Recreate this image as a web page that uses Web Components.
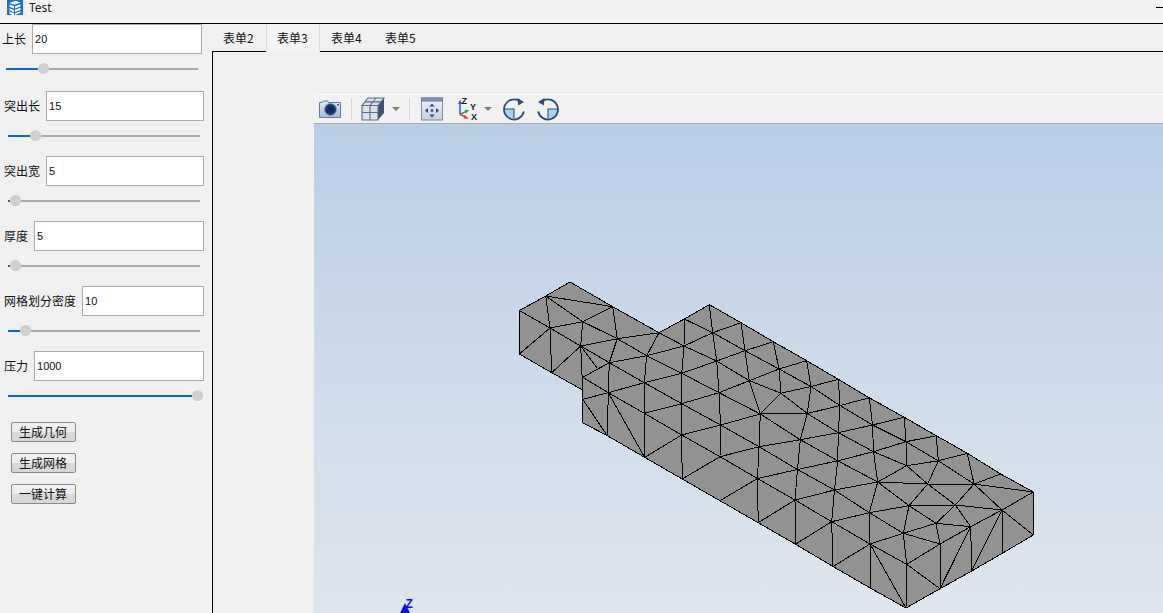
<!DOCTYPE html>
<html>
<head>
<meta charset="utf-8">
<title>Test</title>
<style>
  html, body { margin: 0; height: 100%; overflow: hidden; background: #f0f0f0; }
  body { font: 12px "Noto Sans CJK SC", "Noto Sans", sans-serif; color: #111; }
  #app { display: flex; flex-direction: column; height: 613px; }
  #body { display: flex; flex: 1; min-height: 0; }
  #side { width: 212px; flex: none; padding-left: 4px; box-sizing: border-box; }
  #main { flex: 1; display: flex; flex-direction: column; min-width: 0; }
  #actions { display: flex; flex-direction: column; gap: 11px; margin: 6px 0 0 7px; align-items: flex-start; }
</style>
</head>
<body>
<div id="app">
  <win-title>Test</win-title>
  <div id="body">
    <div id="side">
      <param-row label="上长" value="20" fill="32" first></param-row>
      <param-row label="突出长" value="15" fill="22"></param-row>
      <param-row label="突出宽" value="5" fill="2"></param-row>
      <param-row label="厚度" value="5" fill="2"></param-row>
      <param-row label="网格划分密度" value="10" fill="12"></param-row>
      <param-row label="压力" value="1000" fill="184"></param-row>
      <div id="actions">
        <action-button>生成几何</action-button>
        <action-button>生成网格</action-button>
        <action-button>一键计算</action-button>
      </div>
    </div>
    <div id="main">
      <tab-bar>
        <tab-item>表单2</tab-item>
        <tab-item selected>表单3</tab-item>
        <tab-item>表单4</tab-item>
        <tab-item>表单5</tab-item>
      </tab-bar>
      <tab-pane>
        <view-toolbar></view-toolbar>
        <mesh-view></mesh-view>
      </tab-pane>
    </div>
  </div>
</div>

<script>
class WinTitle extends HTMLElement {
  constructor(){
    super();
    const shadowRoot = this.attachShadow({mode: 'open'});
    shadowRoot.innerHTML = `
    <style>
      :host { display: flex; align-items: flex-start; height: 23px; border-bottom: 1px solid #000; background: #f3f2f2; flex: none; font: 12px "Noto Sans", "Liberation Sans", sans-serif; color: #222; }
      svg { margin-left: 7px; flex: none; }
      span { margin-left: 6px; line-height: 15px; }
      i { margin-left: auto; width: 7px; height: 1px; background: #000; margin-top: 7px; }
    </style>
    <svg width="16" height="15" viewBox="0 0 16 15">
      <rect width="16" height="15" fill="#1a6fdc"/>
      <path d="M2.5 3l6-2.2 5 1.7-6 2.2zM2.5 4.6l4.5 1.7v2.2l-4.5-1.7zM8 6.2l5.5-2v2.2L8 8.5zM2.5 8.2L7 9.9v2.2L2.5 10.4zM8 9.8l5.5-2V10L8 12zM2.5 11.6l4.5 1.7V15H5.5l-3-1.2zM8 13.2l5.5-2v1.6L8 15z" fill="#fff"/>
    </svg>
    <span><slot></slot></span>
    <i></i>`;
  }
}

class ParamRow extends HTMLElement {
  constructor(){
    super();
    const shadowRoot = this.attachShadow({mode: 'open'});
    const label = this.getAttribute('label');
    const value = this.getAttribute('value');
    const fill = this.getAttribute('fill');
    shadowRoot.innerHTML = `
    <style>
      :host { display: block; width: 200px; height: 65px; }
      :host([first]) { margin-left: -2px; height: 67px; }
      .top { display: flex; gap: 6px; align-items: center; height: 30px; }
      label { flex: none; padding-bottom: 2px; }
      .field { flex: 1; height: 30px; box-sizing: border-box; border: 1px solid #ababab; background: #fff; padding-left: 2px; font: 11px/28px "Liberation Sans", sans-serif; color: #111; }
      .slider { display: flex; align-items: center; width: 192px; height: 11px; margin: 9px 0 0 4px; }
      .blue { height: 2px; background: #0a67bd; flex: none; }
      .thumb { width: 11px; height: 11px; border-radius: 50%; background: #cfcfcf; flex: none; }
      .rest { height: 2px; background: #ababab; flex: 1; min-width: 0; }
    </style>
    <div class="top"><label>${label}</label><div class="field">${value}</div></div>
    <div class="slider"><div class="blue" style="width:${fill}px"></div><div class="thumb"></div><div class="rest"></div></div>`;
  }
}

class ActionButton extends HTMLElement {
  constructor(){
    super();
    const shadowRoot = this.attachShadow({mode: 'open'});
    shadowRoot.innerHTML = `
    <style>
      :host { display: block; width: 65px; height: 20px; box-sizing: border-box; border: 1px solid #8a8a8a; border-radius: 2px; text-align: center; line-height: 18px; padding-right: 1px; background: linear-gradient(#f2f2f2 0, #ececec 50%, #dadada 50%, #d6d6d6 100%); }
    </style>
    <slot></slot>`;
  }
}

class TabBar extends HTMLElement {
  constructor(){
    super();
    const shadowRoot = this.attachShadow({mode: 'open'});
    shadowRoot.innerHTML = `
    <style>
      :host { display: flex; flex: none; height: 28px; box-sizing: border-box; border-bottom: 1px solid #000; }
    </style>
    <slot></slot>`;
  }
}

class TabItem extends HTMLElement {
  constructor(){
    super();
    const shadowRoot = this.attachShadow({mode: 'open'});
    shadowRoot.innerHTML = `
    <style>
      :host { display: block; width: 54px; height: 27px; box-sizing: border-box; padding-left: 11px; line-height: 27px; }
      :host([selected]) { height: 28px; background: #f3f3f3; border-left: 1px solid #dcdcdc; border-right: 1px solid #dcdcdc; padding-left: 10px; }
    </style>
    <slot></slot>`;
  }
}

class TabPane extends HTMLElement {
  constructor(){
    super();
    const shadowRoot = this.attachShadow({mode: 'open'});
    shadowRoot.innerHTML = `
    <style>
      :host { display: flex; flex-direction: column; flex: 1; min-height: 0; border-left: 1px solid #000; padding: 42px 0 0 101px; }
    </style>
    <slot></slot>`;
  }
}

// toolbar icons are drawn on the pixel grid of the 30px strip
const ICONS = {
  camera: `<svg width="24" height="24" viewBox="0 0 24 24" style="margin-left:4px">
    <defs><linearGradient id="cam" x1="0" y1="0" x2="0" y2="1"><stop offset="0" stop-color="#e2ecf6"/><stop offset="1" stop-color="#a3bcd6"/></linearGradient></defs>
    <path d="M1.5 5.5h3l1-1.5h4l1 1.5h12v15h-21z" fill="url(#cam)" stroke="#5f7d9c" stroke-linejoin="round"/>
    <circle cx="12.5" cy="12.5" r="6" fill="#1d3a70" stroke="#7f9cbc"/>
    <circle cx="12.5" cy="12.5" r="3.2" fill="#0f2c64"/>
    <rect x="19" y="7" width="2" height="1.5" fill="#34577f"/>
  </svg>`,
  cube: `<svg width="24" height="24" viewBox="0 0 24 24" style="margin-left:9px">
    <path d="M1 8.5L7 1h16v15l-6 7H1z" fill="#dde2ea"/>
    <path d="M17 8.5L23 1v15l-6 7z" fill="#3f5270"/>
    <path d="M1 8.5L7 1h16l-6 7.5zM1 8.5h16V23H1zM9 8.5V23M1 15.5h16M9 8.5L15 1M4 4.8h16" fill="none" stroke="#5f6f86" stroke-width="1.2"/>
  </svg>`,
  fit: `<svg width="24" height="24" viewBox="0 0 24 24" style="margin-left:10px">
    <defs><linearGradient id="fitbg" x1="0" y1="0" x2="0" y2="1"><stop offset="0" stop-color="#f0f3f8"/><stop offset="1" stop-color="#c3cedd"/></linearGradient></defs>
    <rect x="1.5" y="1" width="21" height="22" fill="url(#fitbg)" stroke="#7a8da6"/>
    <rect x="1.5" y="1" width="21" height="3" fill="#8a9db6" stroke="#64799a"/>
    <path d="M12 6.5l-2.6 3h5.2zM12 20.5l-2.6-3h5.2zM5 13.5l3-2.6v5.2zM19 13.5l-3-2.6v5.2z" fill="#2a4d7c"/>
    <rect x="10.8" y="12.3" width="2.4" height="2.4" fill="#2a4d7c"/>
  </svg>`,
  triad: `<svg width="22" height="24" viewBox="0 0 22 24" style="margin-left:13px;font:bold 9px 'Liberation Sans',sans-serif">
    <path d="M3 17.5V6" stroke="#2f63b4" stroke-width="1.5"/><path d="M3 2.5L.9 7h4.2z" fill="#2f63b4"/>
    <path d="M3 17.5l6-3" stroke="#2f9a55" stroke-width="1.5"/><path d="M12 13l-4.4.1 1.8 3.4z" fill="#2f9a55"/>
    <path d="M3 17.5l6 2.5" stroke="#e0383a" stroke-width="1.5"/><path d="M12 21.8l-4-3.6-1.4 3.4z" fill="#e0383a"/>
    <text x="4.5" y="6.5" fill="#223">Z</text><text x="13" y="12.5" fill="#223">Y</text><text x="14" y="22.5" fill="#223">X</text>
  </svg>`,
  rotR: `<svg width="24" height="24" viewBox="0 0 24 24" style="margin-left:10px">
    <path d="M2.5 12H12v9.5C7 21.5 2.5 17 2.5 12z" fill="#a6d4f2"/>
    <path d="M2.5 12H12v9" fill="none" stroke="#2b4d75" stroke-width="1.1"/>
    <path d="M21.8 14.5A10 10 0 1 1 17 3.8" fill="none" stroke="#2b4d75" stroke-width="1.8"/>
    <path d="M15.5 1l6.5 4-5.8 3.6z" fill="#2b4d75"/>
  </svg>`,
  rotL: `<svg width="24" height="24" viewBox="0 0 24 24" style="margin-left:10px">
    <path d="M21.5 12H12v9.5c5 0 9.5-4.5 9.5-9.5z" fill="#a6d4f2"/>
    <path d="M21.5 12H12v9" fill="none" stroke="#2b4d75" stroke-width="1.1"/>
    <path d="M2.2 14.5A10 10 0 1 0 7 3.8" fill="none" stroke="#2b4d75" stroke-width="1.8"/>
    <path d="M8.5 1L2 5l5.8 3.6z" fill="#2b4d75"/>
  </svg>`
};

class ViewToolbar extends HTMLElement {
  constructor(){
    super();
    const shadowRoot = this.attachShadow({mode: 'open'});
    const sep = (m) => `<b class="sep" style="margin-left:${m}px"></b>`;
    const drop = (m) => `<svg width="8" height="4" viewBox="0 0 8 4" style="margin-left:${m}px"><path d="M0 0h8L4 4z" fill="#7f7f7f"/></svg>`;
    shadowRoot.innerHTML = `
    <style>
      :host { display: flex; align-items: center; flex: none; height: 30px; box-sizing: border-box; border-top: 1px solid #fbfbfb; border-bottom: 1px solid #a9a9a9; background: #f1f1f1; }
      svg { flex: none; display: block; }
      .sep { width: 1px; height: 22px; background: #d4d4d4; flex: none; }
    </style>
    ${ICONS.camera}${sep(9)}${ICONS.cube}${drop(7)}${sep(9)}${ICONS.fit}${ICONS.triad}${drop(5)}${ICONS.rotR}${ICONS.rotL}`;
  }
}

// mesh vertices in page pixels, read off the reference
const V = {
  a:[519.5,310.5],b:[545.7,296],c:[570,282],d:[612.7,306.7],e:[582.7,321.7],f:[550,328],g:[580.7,346],h:[617.3,338.7],i:[659,332.7],j:[609.3,362.7],k:[646.7,355.7],l:[684.3,319],m:[709.3,304.7],n:[712.7,332.7],o:[741,322.7],p:[684,346],q:[716.7,361],r:[745,350.7],s:[773.3,341.7],t:[779,369],u:[681.7,373.3],v:[644.3,382.7],w:[582.7,377.3],x:[608.3,392.7],y:[582.7,399.3],z:[644.3,413.3],
  aa:[681.7,403.7],ab:[719,392.7],ac:[749.3,380.7],ad:[760.3,414],ae:[720.5,425],af:[681.7,435],ag:[644.6,457.3],ah:[607.3,435.7],ai:[582.7,422.7],aj:[551.7,372.7],ak:[519.3,354],al:[582.7,390],am:[597.3,368.3],
  ba:[806.7,360.7],bb:[838.3,379.3],bc:[869.3,397.8],bd:[904.2,417.3],be:[936.3,435.7],bf:[967.3,453.3],bg:[1000.7,474],bh:[1033.3,492],
  ca:[781,393.2],cb:[811,386.5],cc:[840,405.5],cd:[872.5,425],ce:[906,441.7],cf:[938.3,460.8],cg:[974,484],
  da:[807.3,413.5],db:[838.3,432.7],dc:[873.5,451.7],dd:[906.7,465.7],de:[927.7,484],
  ea:[800.3,439.7],eb:[837.7,460.8],ec:[877.7,482],
  fa:[797.5,469.5],fb:[834.5,490],fc:[869.3,512.7],fd:[909,505.7],fe:[955.3,505],ff:[1002,510],fg:[1033.3,535],
  ga:[795,500],gb:[831.7,521.7],gc:[870,544],gd:[903.3,533.3],ge:[936,523.3],gf:[970.7,526.7],gg:[940,544],gh:[906.7,564.3],
  ha:[906,608],hb:[940,588.7],hc:[971.7,571],hd:[1002.3,553.3],he:[870.7,588.3],hf:[833,566.5],hg:[795.5,544.2],hh:[758.2,522.7],
  ia:[759,446.7],ib:[757.5,478.5],ic:[720,456.7],id:[720,500.7],ie:[682.2,479]
};
const OUTLINE = 'a b c d i l m o s ba bb bc bd be bf bg bh fg hd hc hb ha he hf hg hh id ie ag ah ai al aj ak';
const EDGES = [
  'a f g j v aa ae ia fa fb fc gd gg',
  'b e h k u ab ad ea eb ec fd ge gf',
  'b d','b f aj','ak f','aj g','g e d','f e','e g al','g h i','d h j','j k p n o','i k v z ag','j x ah','w x','w j','g am',
  'w al y ai','y x v u q r s','x z af ic ib ga gb gc gh hb','x ag','y ah',
  'i p q ac ca da db dc dd de fe gf',
  'l n r t cb cc cd ce cf cg ff fg',
  'm n q ab ae ic id','l p u aa af ie','o r ac ad ia ib hh','s t ca ad','ba cb da ea fa ga hg','bb cc db eb fb gb hf',
  'bc cd dc ec fc gc he','bd ce dd','be cf de fd gd gh ha','bf cg fe ge gg hb','gf hc','ff hd',
  'ag af ae ad ca cb bb','ie ic ia ea db cd bd','id ib fa eb dc ce be','hh ga fb ec dd cf bf','hg gb fc fd fe ff','hf gc gd ge',
  'gh gg gf ff bh','gc ha','gd gg','hb gf','hc ff','ec de cg bh','bg cg','z aa ab ac t ba','da cc bc','ad da'
];

class MeshView extends HTMLElement {
  constructor(){
    super();
    const shadowRoot = this.attachShadow({mode: 'open'});
    const pts = (names) => names.split(' ').map(n => V[n].join(',')).join(' ');
    const lines = EDGES.map(e => `<polyline points="${pts(e)}"/>`).join('');
    shadowRoot.innerHTML = `
    <style>
      :host { display: block; flex: 1; min-height: 0; background: linear-gradient(#b9cee5 0, #c6d6e8 30%, #d2deeb 65%, #dfe5ee 100%); }
      svg { display: block; width: 100%; height: 100%; }
      .wire polyline, .wire polygon { fill: none; stroke: #000; stroke-width: 1; shape-rendering: crispEdges; }
    </style>
    <svg viewBox="314 124 849 489">
      <polygon points="${pts(OUTLINE)}" fill="#929292"/>
      <g class="wire">${lines}<polygon points="${pts(OUTLINE)}"/></g>
      <path d="M405 603L400 613h10z" fill="#0a0aff"/>
      <text x="405.5" y="608" fill="#0a0aff" font-family="Liberation Sans" font-weight="bold" font-size="12">Z</text>
    </svg>`;
  }
}

customElements.define('win-title', WinTitle);
customElements.define('param-row', ParamRow);
customElements.define('action-button', ActionButton);
customElements.define('tab-bar', TabBar);
customElements.define('tab-item', TabItem);
customElements.define('tab-pane', TabPane);
customElements.define('view-toolbar', ViewToolbar);
customElements.define('mesh-view', MeshView);
</script>
</body>
</html>
